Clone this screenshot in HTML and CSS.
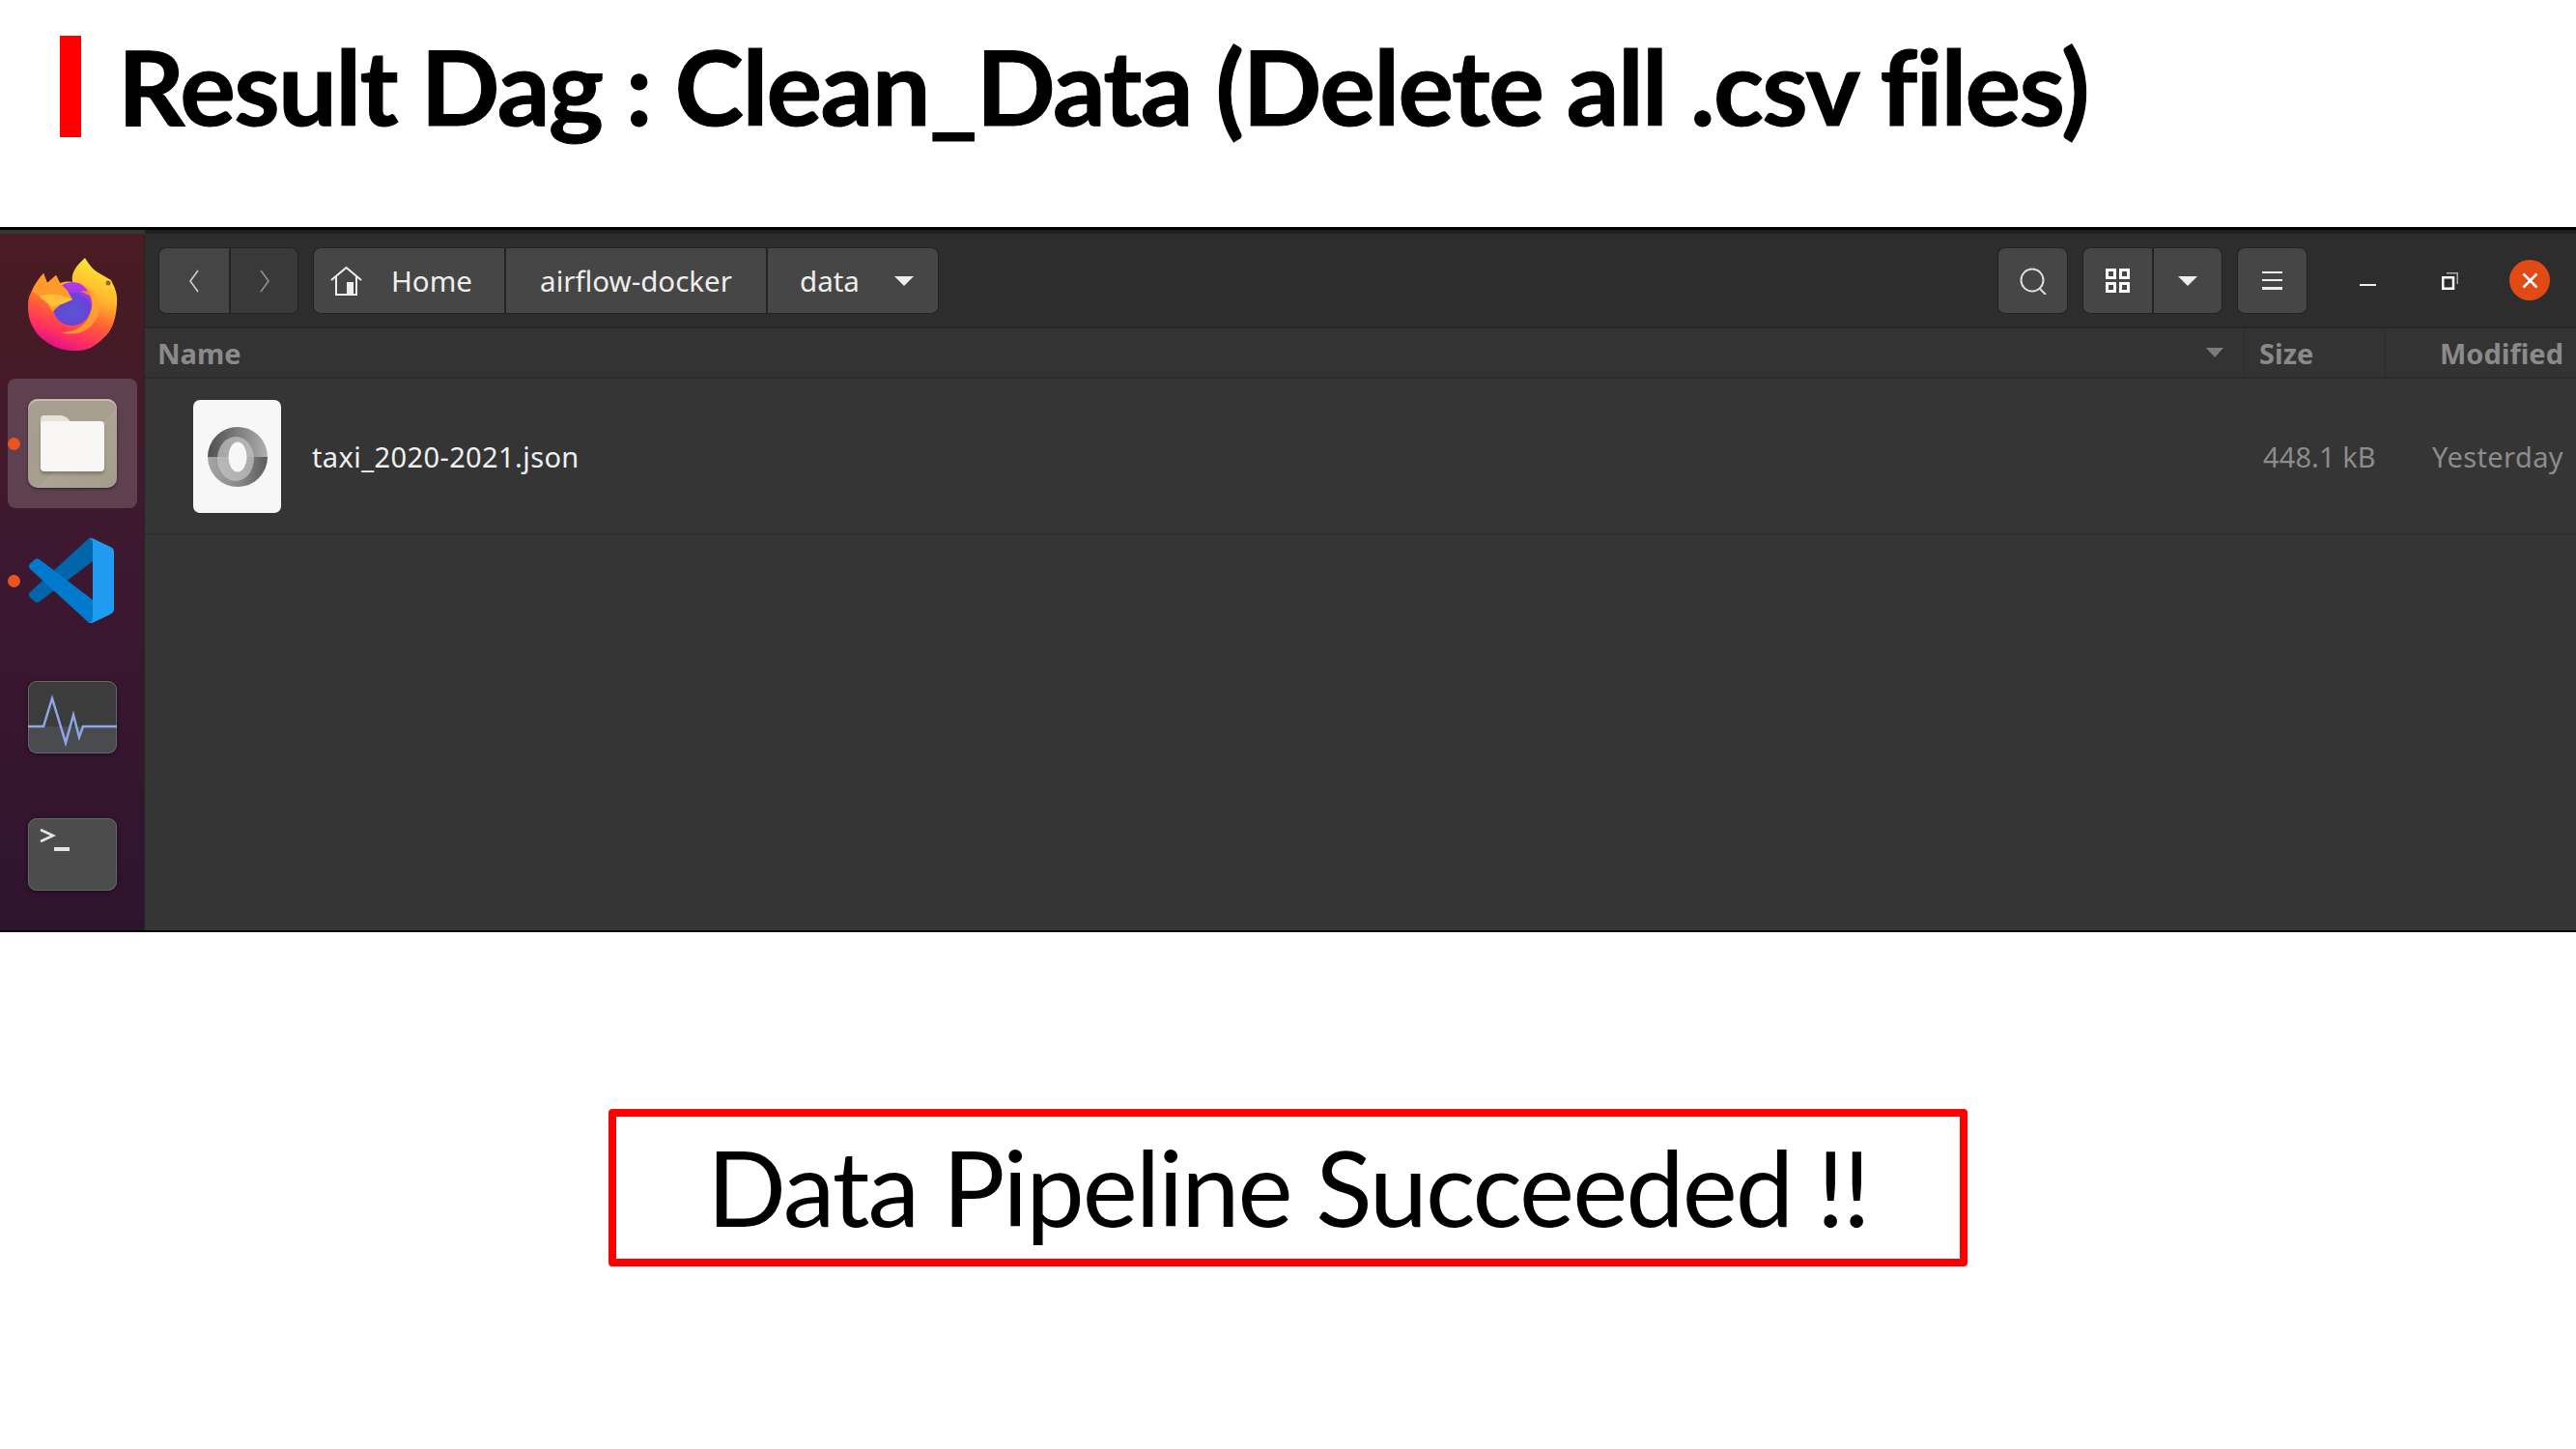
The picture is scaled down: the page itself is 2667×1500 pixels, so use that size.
FILE: index.html
```html
<!DOCTYPE html>
<html lang="en">
<head>
<meta charset="utf-8">
<title>Result Dag</title>
<link rel="stylesheet" href="styles.css">
</head>
<body>
<header class="slide-head">
  <span class="accent"></span>
  <h1 class="title">Result Dag : Clean_Data (Delete all .csv files)</h1>
</header>
<section class="desktop">
  <nav class="dock">
    <div class="dock-item">
      <svg class="ff" viewBox="0 0 110 110">
        <defs>
          <linearGradient id="ffb" x1="0.75" y1="0.05" x2="0.4" y2="1">
            <stop offset="0" stop-color="#ffe333"/><stop offset="0.35" stop-color="#ffb62e"/><stop offset="0.6" stop-color="#ff6333"/><stop offset="0.85" stop-color="#ff2d63"/><stop offset="1" stop-color="#e0118a"/>
          </linearGradient>
          <linearGradient id="ffp" x1="0.6" y1="0" x2="0.4" y2="1">
            <stop offset="0" stop-color="#b83ae6"/><stop offset="0.5" stop-color="#8a3adf"/><stop offset="1" stop-color="#5a46cf"/>
          </linearGradient>
          <radialGradient id="ffc" cx="0.5" cy="0.55" r="0.6">
            <stop offset="0" stop-color="#5a55d0"/><stop offset="1" stop-color="#6a3fdc"/>
          </radialGradient>
        </defs>
        <path fill="url(#ffb)" d="M25 23L29 33L38 25L42 33C46 32 50 31 55 32C53 22 60 14 68 7C72 14 77 20 83 23L95 30C99 38 102 44 101 55C100 72 95 84 87 90C78 99 70 103 60 103C48 103 40 101 33 97C24 92 18 86 15 80C10 72 9 64 9 57C9 50 10 47 12 43C15 35 20 29 25 23Z"/>
        <circle cx="55" cy="53" r="21" fill="url(#ffp)"/>
        <ellipse cx="54.500" cy="60" rx="19" ry="17" fill="url(#ffc)"/>
        <path fill="#ff9a2b" d="M25 23L29 33L38 25L42 33L50 41L55 50L43 55L34 63L28 52L21 47L14 42C16 34 20 29 25 23Z"/>
        <path fill="#ffc13a" d="M21 47C28 44 40 43 55 50C48 54 42 55 34 58C29 53 25 51 21 47Z"/>
        <path fill="#ffa52e" opacity="0.85" d="M62 33C78 38 87 52 81 68C75 82 58 89 44 84C60 84 75 74 75 56C75 46 70 38 62 33Z"/>
        <path fill="#ff8a2b" d="M63 41L74 42L73 46Z"/>
        <circle cx="92" cy="33" r="2.500" fill="#8a6a3a"/>
      </svg>
    </div>
    <div class="dock-item active">
      <span class="run-dot"></span>
      <div class="files-icon">
        <span class="folder-tab"></span>
        <span class="folder-body"></span>
      </div>
    </div>
    <div class="dock-item">
      <span class="run-dot"></span>
      <svg class="vscode" viewBox="0 0 100 100">
        <path fill="#0065a9" d="M96.46 10.8L75.86.88C73.47-.27 70.62.21 68.75 2.08L1.3 63.58C-.52 65.24-.51 68.09 1.3 69.75L6.81 74.75C8.3 76.1 10.53 76.2 12.13 74.99L93.36 13.37C96.09 11.3 100 13.25 100 16.67V16.43C100 14.03 98.62 11.84 96.46 10.8Z"/>
        <path fill="#007acc" d="M96.46 89.2L75.86 99.12C73.47 100.27 70.62 99.79 68.75 97.92L1.3 36.42C-.52 34.76-.51 31.91 1.3 30.25L6.81 25.25C8.3 23.9 10.53 23.8 12.13 25.01L93.36 86.63C96.09 88.7 100 86.75 100 83.33V83.57C100 85.97 98.62 88.16 96.46 89.2Z"/>
        <path fill="#1f9cf0" d="M75.86 99.13C73.47 100.27 70.62 99.79 68.75 97.92C71.06 100.22 75 98.59 75 95.33V4.67C75 1.41 71.06-.22 68.75 2.08C70.62.21 73.47-.27 75.86.87L96.46 10.78C98.62 11.82 100 14.01 100 16.41V83.59C100 85.99 98.62 88.18 96.46 89.22Z"/>
      </svg>
    </div>
    <div class="dock-item">
      <div class="app-tile monitor">
        <svg class="pulse" viewBox="0 0 92 75">
          <path fill="none" stroke="#8ea6e6" stroke-width="2.500" d="M0 47H16L25 18L39 64L47 35L53 58L57 47H92"/>
        </svg>
      </div>
    </div>
    <div class="dock-item">
      <div class="app-tile terminal">
        <svg class="prompt" viewBox="0 0 92 75">
          <path fill="none" stroke="#e6e6e6" stroke-width="2.500" d="M13 12L26 18L13 24"/>
          <path fill="none" stroke="#e6e6e6" stroke-width="4" d="M27 32H43"/>
        </svg>
      </div>
    </div>
  </nav>
  <div class="window">
    <div class="toolbar">
      <div class="group nav">
        <button class="seg nav-back">
          <svg class="ico-chev" viewBox="0 0 12 24"><path d="M10 1L2 12L10 23"/></svg>
        </button>
        <button class="seg nav-fwd">
          <svg class="ico-chev dim" viewBox="0 0 12 24"><path d="M2 1L10 12L2 23"/></svg>
        </button>
      </div>
      <div class="group path">
        <div class="seg crumb home">
          <svg class="ico-home" viewBox="0 0 33 30"><path d="M1 14L16.500 1L32 14M6 10V29H27V10"/><path class="fill" d="M17 16H24V29H17Z"/></svg>
          <span>Home</span>
        </div>
        <div class="seg crumb airflow"><span>airflow-docker</span></div>
        <div class="seg crumb data"><span>data</span><span class="caret"></span></div>
      </div>
      <div class="spacer"></div>
      <button class="group single search">
        <svg class="ico-search" viewBox="0 0 28 28"><circle cx="13" cy="13" r="11.500"/><path d="M20 21L27 28"/></svg>
      </button>
      <div class="group view">
        <button class="seg view-grid">
          <svg class="ico-grid" viewBox="0 0 25 25"><path d="M1.500 1.500H9.500V9.500H1.500ZM15.500 1.500H23.500V9.500H15.500ZM1.500 15.500H9.500V23.500H1.500ZM15.500 15.500H23.500V23.500H15.500Z"/></svg>
        </button>
        <button class="seg view-more"><span class="caret"></span></button>
      </div>
      <button class="group single menu">
        <span class="burger"></span>
      </button>
      <div class="winctl">
        <span class="min"></span>
        <svg class="ico-max" viewBox="0 0 17 18"><path class="back" d="M5 .75H16.250V12"/><path class="front" d="M1.250 5.250H12V16.750H1.250Z"/></svg>
        <span class="close">
          <svg class="ico-x" viewBox="0 0 17 17"><path d="M1.500 1.500L15.500 15.500M15.500 1.500L1.500 15.500"/></svg>
        </span>
      </div>
    </div>
    <div class="col-head">
      <div class="col col-name"><span>Name</span><span class="caret dim"></span></div>
      <div class="col col-size"><span>Size</span></div>
      <div class="col col-mod"><span>Modified</span></div>
    </div>
    <div class="file-row">
      <div class="file-thumb">
        <svg class="ico-json" viewBox="0 0 62 62">
          <defs>
            <linearGradient id="ringTop" x1="0" y1="0" x2="1" y2="0">
              <stop offset="0" stop-color="#4f4f4f"/><stop offset="0.45" stop-color="#777"/><stop offset="1" stop-color="#b0b0b0"/>
            </linearGradient>
            <linearGradient id="ringBot" x1="0" y1="0" x2="1" y2="0">
              <stop offset="0" stop-color="#a5a5a5"/><stop offset="0.5" stop-color="#8a8a8a"/><stop offset="1" stop-color="#5c5c5c"/>
            </linearGradient>
          </defs>
          <path fill="url(#ringTop)" d="M0 31A31 31 0 0 1 62 31Z"/>
          <path fill="url(#ringBot)" d="M0 31A31 31 0 0 0 62 31Z"/>
          <ellipse cx="29" cy="33" rx="19" ry="23" fill="#c4c4c4" opacity="0.7"/>
          <ellipse class="json-hole" cx="31" cy="31" rx="9.500" ry="15.500"/>
        </svg>
      </div>
      <span class="file-name">taxi_2020-2021.json</span>
      <span class="file-size">448.1 kB</span>
      <span class="file-date">Yesterday</span>
    </div>
    <div class="empty"></div>
  </div>
</section>
<section class="callout-wrap">
  <div class="callout">Data Pipeline Succeeded !!</div>
</section>
</body>
</html>
```
FILE: styles.css
```css
* { box-sizing: border-box; }
html, body { margin: 0; padding: 0; background: #fff; }
body { width: 2667px; height: 1500px; overflow: hidden; font-family: "Lato", "Liberation Sans", sans-serif; }

.slide-head { height: 235px; padding: 37px 0 0 62px; display: flex; align-items: flex-start; gap: 38px; }
.accent { width: 22px; height: 105px; background: #ff0000; flex: none; }
.title { margin: 0; font-family: "Lato", sans-serif; font-weight: 700; font-size: 108px; line-height: 102px; letter-spacing: -1.65px; -webkit-text-stroke: 1px #000; color: #000; white-space: nowrap; }

.desktop { height: 730px; display: flex; background: #353535; border-top: 3px solid #000; border-bottom: 2px solid #000; }
.dock { width: 150px; flex: none; margin-top: 4px; background: linear-gradient(180deg, #4a1c22 0%, #3d1830 45%, #2f142e 100%); border-right: 1px solid #242424; padding: 14px 0 0 8px; display: flex; flex-direction: column; }
.dock-item { width: 134px; height: 134px; display: flex; align-items: center; justify-content: center; position: relative; flex: none; border-radius: 8px; }
.dock-item:nth-child(1) { height: 136px; align-items: flex-start; }
.dock-item:nth-child(2) { margin-bottom: 8px; }
.dock-item:nth-child(4) { height: 149px; }
.dock-item:nth-child(5) { height: 135px; }
.dock-item.active { background: #5f404e; }
.ff { width: 110px; height: 110px; margin-top: 4px; }
.run-dot { position: absolute; left: 0; top: 61px; width: 13px; height: 13px; border-radius: 50%; background: #e95420; }
.files-icon { width: 92px; height: 92px; border-radius: 10px; background: linear-gradient(135deg, #a69f8f 0, #a69f8f 55%, #aca596 55%, #a39c8b 100%); box-shadow: 0 1px 3px rgba(0,0,0,.5), inset 0 2px 0 #c5bdae; position: relative; }
.folder-tab { position: absolute; left: 13px; top: 17px; width: 32px; height: 20px; background: #e6e2da; border-radius: 4px 12px 0 0; }
.folder-body { position: absolute; left: 13px; top: 23px; width: 66px; height: 52px; background: #f8f7f5; border-radius: 4px; box-shadow: 0 3px 3px rgba(0,0,0,.22); }
.vscode { width: 88px; height: 90px; margin-left: -2px; }
.app-tile { width: 92px; height: 75px; border-radius: 9px; box-shadow: 0 1px 4px rgba(0,0,0,.5), inset 0 0 0 1px #666; overflow: hidden; }
.monitor { background: linear-gradient(180deg, #3c3c3c 0, #3c3c3c 62%, #4a4b4e 62%); }
.terminal { background: #4c4c4c; }
.pulse, .prompt { width: 92px; height: 75px; display: block; }

.window { flex: 1; display: flex; flex-direction: column; min-width: 0; }
.toolbar { height: 102px; flex: none; background: #2d2d2d; border-top: 4px solid #1f1f1f; border-bottom: 2px solid #262626; padding: 15px 0 0 15px; display: flex; align-items: flex-start; color: #eee; }
.group { display: flex; height: 67px; border-radius: 7px; overflow: hidden; box-shadow: 0 0 0 1px #232323; flex: none; }
.seg { border: 0; padding: 0; height: 67px; background: #464646; display: flex; align-items: center; color: #eeeeec; }
button { font: inherit; }
.nav { width: 143px; margin-right: 17px; gap: 2px; background: #232323; }
.nav-back { width: 72px; justify-content: center; background: #454545; }
.nav-fwd { width: 69px; justify-content: center; background: #393939; }
.ico-chev { width: 12px; height: 24px; fill: none; stroke: #cfcfcf; stroke-width: 1.6; }
.ico-chev.dim { stroke: #8f8f8f; }
.path { gap: 2px; background: #232323; font-family: "Noto Sans", sans-serif; font-size: 29.500px; }
.crumb span { white-space: nowrap; }
.home { width: 197px; padding-left: 17px; }
.ico-home { width: 33px; height: 30px; margin-right: 30px; fill: none; stroke: #eee; stroke-width: 2; }
.ico-home .fill { fill: #eee; stroke: none; }
.airflow { width: 269px; justify-content: center; }
.data { width: 176px; padding-left: 33px; }
.caret { display: inline-block; width: 0; height: 0; border-left: 10px solid transparent; border-right: 10px solid transparent; border-top: 10px solid #eee; }
.data .caret { margin-left: 36px; }
.spacer { flex: 1; }
.single { width: 71px; border: 0; padding: 0; align-items: center; justify-content: center; background: #464646; }
.search { margin-right: 17px; }
.ico-search { width: 28px; height: 28px; fill: none; stroke: #ddd; stroke-width: 2; }
.view { width: 143px; gap: 2px; background: #232323; margin-right: 17px; }
.view-grid { width: 71px; justify-content: center; }
.view-more { width: 70px; justify-content: center; }
.ico-grid { width: 25px; height: 25px; fill: none; stroke: #fff; stroke-width: 3; }
.burger { width: 21px; height: 19px; border-top: 2px solid #eee; border-bottom: 3px solid #eee; position: relative; }
.burger::before { content: ""; position: absolute; left: 0; right: 0; top: 6px; height: 2px; background: #eee; }
.winctl { width: 279px; height: 67px; position: relative; flex: none; }
.min { position: absolute; left: 55px; top: 37px; width: 17px; height: 2px; background: #eee; }
.ico-max { position: absolute; left: 140px; top: 25px; width: 17px; height: 18px; fill: none; }
.ico-max .back { stroke: #aaa; stroke-width: 1.5; }
.ico-max .front { stroke: #fff; stroke-width: 2.500; }
.close { position: absolute; left: 210px; top: 12px; width: 42px; height: 42px; border-radius: 50%; background: #e14a15; display: flex; align-items: center; justify-content: center; }
.ico-x { width: 17px; height: 17px; fill: none; stroke: #fff; stroke-width: 2.5; }

.col-head { height: 52px; flex: none; background: #333; border-bottom: 2px solid #2b2b2b; display: flex; font-family: "Noto Sans", sans-serif; font-weight: 700; font-size: 29px; color: #8a8a8a; }
.col { height: 50px; display: flex; align-items: center; }
.col-name { width: 2174px; padding-left: 13px; justify-content: space-between; padding-right: 21px; border-right: 1px solid #2b2b2b; }
.caret.dim { border-top-color: #7c7c7c; border-left-width: 9px; border-right-width: 9px; }
.col-size { width: 146px; padding-left: 15px; border-right: 1px solid #2b2b2b; }
.col-mod { flex: 1; justify-content: flex-end; padding-right: 13px; white-space: nowrap; }

.file-row { height: 162px; flex: none; padding-top: 1px; border-bottom: 2px solid #2e2e2e; display: flex; align-items: center; font-family: "Noto Sans", sans-serif; font-size: 29px; letter-spacing: .4px; }
.file-thumb { width: 91px; height: 117px; margin-left: 50px; background: #f7f7f7; border-radius: 7px; display: flex; align-items: center; justify-content: center; flex: none; }
.ico-json { width: 62px; height: 62px; }
.json-hole { fill: #f7f7f7; }
.file-name { margin-left: 32px; color: #f0f0f0; flex: 1; }
.file-size { width: 140px; margin-right: 3px; color: #8c8c8c; white-space: nowrap; letter-spacing: .1px; }
.file-date { width: 181px; padding-right: 13px; text-align: right; color: #8c8c8c; white-space: nowrap; }
.empty { flex: 1; }

.callout-wrap { display: flex; justify-content: center; padding-top: 183px; }
.callout { width: 1407px; height: 163px; padding-bottom: 4px; border: 8px solid #ff0000; border-radius: 4px; display: flex; align-items: center; justify-content: center; font-family: "Lato", sans-serif; font-weight: 400; font-size: 108px; letter-spacing: -2px; color: #000; white-space: nowrap; }
```
